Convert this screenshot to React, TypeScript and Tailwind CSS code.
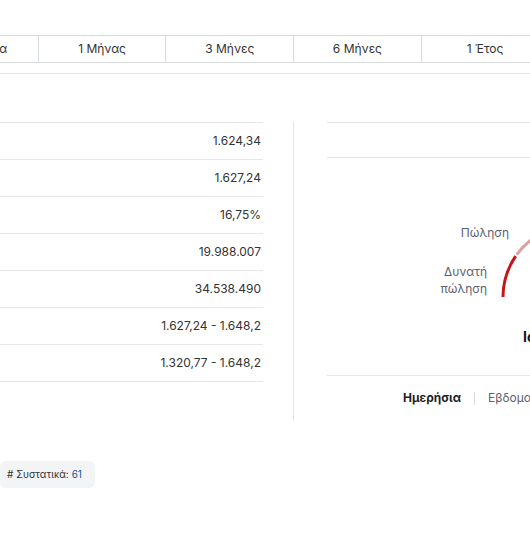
import React from 'react'

const periods = ['1 Εβδομάδα', '1 Μήνας', '3 Μήνες', '6 Μήνες', '1 Έτος']

const stats = [
  { label: 'Προηγ. Κλείσιμο', value: '1.624,34' },
  { label: 'Άνοιγμα', value: '1.627,24' },
  { label: 'Μεταβολή 1 έτους', value: '16,75%' },
  { label: 'Όγκος', value: '19.988.007' },
  { label: 'Μέσος όγκος (3m)', value: '34.538.490' },
  { label: 'Εύρος ημέρας', value: '1.627,24 - 1.648,2' },
  { label: 'Εύρος 52 εβδ.', value: '1.320,77 - 1.648,2' },
]

// arc helper, angles in degrees measured from +x axis going up
const arc = (cx: number, cy: number, r: number, a1: number, a2: number) => {
  const p = (a: number) => [cx + r * Math.cos((a * Math.PI) / 180), cy - r * Math.sin((a * Math.PI) / 180)]
  const [x1, y1] = p(a1)
  const [x2, y2] = p(a2)
  return `M ${x1} ${y1} A ${r} ${r} 0 0 1 ${x2} ${y2}`
}

const Gauge: React.FC = () => {
  // centre relative to the gauge box
  const cx = 248
  const cy = 139
  const r = 72
  return (
    <div className="relative h-[218px] border-b border-[#e4e6e8]">
      <svg className="absolute left-0 top-0" width="460" height="218" viewBox="0 0 460 218">
        <path d={arc(cx, cy, r, 180, 145.5)} stroke="#c3161c" strokeWidth="3" fill="none" />
        <path d={arc(cx, cy, r, 144, 109.5)} stroke="#d9a1a1" strokeWidth="3" fill="none" />
        <path d={arc(cx, cy, r, 108, 73.5)} stroke="#c9cdd2" strokeWidth="3" fill="none" />
      </svg>
      <span className="absolute left-[100px] top-[66px] w-[82px] text-right text-[12px] text-[#5b616e]">Πώληση</span>
      <span className="absolute left-[80px] top-[105px] w-[80px] text-right text-[12px] leading-[17px] text-[#5b616e]">
        Δυνατή
        <br />
        πώληση
      </span>
      <span className="absolute left-[196px] top-[168px] whitespace-nowrap text-[14px] font-bold text-[#141414]">
        Ισχυρή πώληση
      </span>
    </div>
  )
}

export default function App() {
  return (
    <div className="w-[530px] h-[534px] overflow-hidden bg-white font-['Inter',sans-serif] text-[#333]">
      <div className="pt-[35px]">
        <div className="-ml-[90px] flex h-[28px] w-[700px] border-y border-[#d9dcdf]">
          {periods.map((p, i) => (
            <div
              key={p}
              className={`flex w-[127.7px] shrink-0 items-center justify-center text-[12px] ${i > 0 ? 'border-l border-[#d9dcdf]' : ''}`}
            >
              {p}
            </div>
          ))}
        </div>
      </div>
      <div className="mt-[10px] h-px w-full bg-[#e4e6e8]" />

      <div className="mt-[48px] flex">
        {/* key stats */}
        <div className="w-[263px] shrink-0 self-start border-t border-[#e4e6e8]">
          {stats.map((s) => (
            <div key={s.label} className="flex h-[37px] items-center justify-between border-b border-[#e4e6e8] pr-[2px]">
              <span className="-ml-[200px] text-[12px]">{s.label}</span>
              <span className="text-[12px]">{s.value}</span>
            </div>
          ))}
        </div>

        {/* technical summary */}
        <div className="ml-[30px] h-[299px] w-[500px] shrink-0 border-l border-[#e4e6e8] pl-[33px]">
          <div className="h-[36px] border-y border-[#e4e6e8]" />
          <Gauge />
          <div className="flex h-[44px] items-center gap-[13px] pl-[76px] text-[12px]">
            <span className="font-bold text-[#1f1f1f]">Ημερήσια</span>
            <span className="h-[13px] w-px bg-[#d9dcdf]" />
            <span className="text-[#5b616e]">Εβδομαδιαία</span>
            <span className="h-[13px] w-px bg-[#d9dcdf]" />
            <span className="text-[#5b616e]">Μηνιαία</span>
          </div>
        </div>
      </div>

      <div className="mt-[40px] inline-flex h-[27px] items-center rounded-md bg-[#f2f4f6] pl-[7px] pr-[13px] text-[10px]">
        <span># Συστατικά:</span>
        <span className="ml-[3px] text-[#1256a0]">61</span>
      </div>
    </div>
  )
}
